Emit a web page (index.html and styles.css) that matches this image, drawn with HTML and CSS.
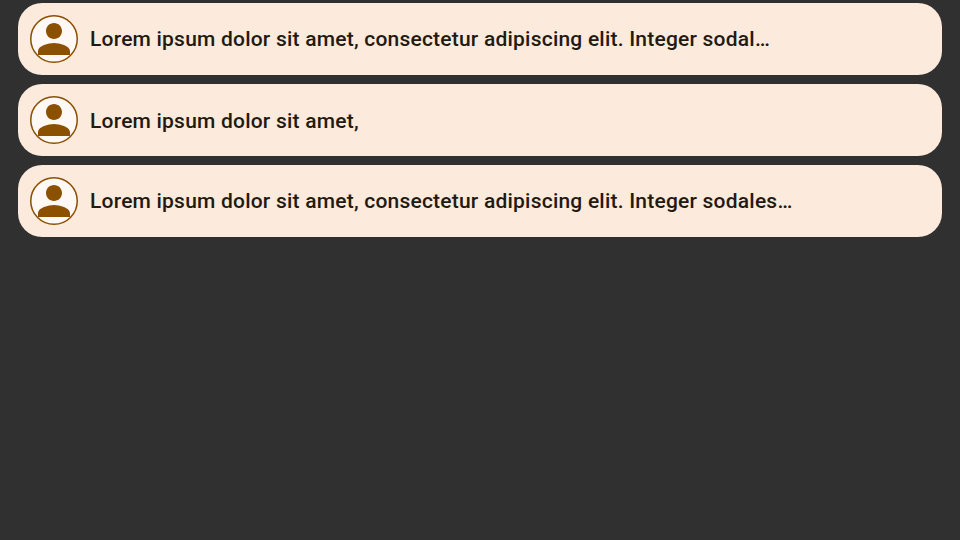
FILE: index.html
```html
<!DOCTYPE html>
<html lang="en">
<head>
<meta charset="utf-8">
<title>Messages</title>
<link rel="stylesheet" href="styles.css">
</head>
<body>
<ul class="list">
  <li class="card">
    <svg class="avatar" viewBox="0 0 48 48"><circle class="ring" cx="24" cy="24" r="23.25"/><path class="person" d="M24 24c4.42 0 8-3.58 8-8s-3.58-8-8-8-8 3.58-8 8 3.58 8 8 8zm0 4c-5.34 0-16 2.68-16 8v4h32v-4c0-5.32-10.66-8-16-8z"/></svg>
    <p class="text">Lorem ipsum dolor sit amet, consectetur adipiscing elit. Integer sodal…</p>
  </li>
  <li class="card">
    <svg class="avatar" viewBox="0 0 48 48"><circle class="ring" cx="24" cy="24" r="23.25"/><path class="person" d="M24 24c4.42 0 8-3.58 8-8s-3.58-8-8-8-8 3.58-8 8 3.58 8 8 8zm0 4c-5.34 0-16 2.68-16 8v4h32v-4c0-5.32-10.66-8-16-8z"/></svg>
    <p class="text text-low">Lorem ipsum dolor sit amet,</p>
  </li>
  <li class="card">
    <svg class="avatar" viewBox="0 0 48 48"><circle class="ring" cx="24" cy="24" r="23.25"/><path class="person" d="M24 24c4.42 0 8-3.58 8-8s-3.58-8-8-8-8 3.58-8 8 3.58 8 8 8zm0 4c-5.34 0-16 2.68-16 8v4h32v-4c0-5.32-10.66-8-16-8z"/></svg>
    <p class="text">Lorem ipsum dolor sit amet, consectetur adipiscing elit. Integer sodales…</p>
  </li>
</ul>
</body>
</html>
```
FILE: styles.css
```css
* { box-sizing: border-box; }
body {
  margin: 0;
  height: 540px;
  overflow: hidden;
  background: #303030;
  font-family: Roboto, sans-serif;
}
.list {
  list-style: none;
  margin: 0;
  padding: 3px 18px 0;
  display: flex;
  flex-direction: column;
  gap: 9px;
}
.card {
  display: flex;
  align-items: center;
  gap: 12px;
  height: 72px;
  padding: 0 12px;
  border-radius: 24px;
  background: #fceadd;
}
.avatar {
  flex: none;
  width: 48px;
  height: 48px;
}
.ring {
  fill: #fff8f4;
  stroke: #8b5000;
  stroke-width: 1.5;
}
.person {
  fill: #8b5000;
}
.text {
  margin: 0;
  font-size: 21px;
  font-weight: 500;
  line-height: 30px;
  letter-spacing: 0.215px;
  white-space: nowrap;
  color: #221a11;
}
.text-low {
  padding-top: 2px;
}
```
